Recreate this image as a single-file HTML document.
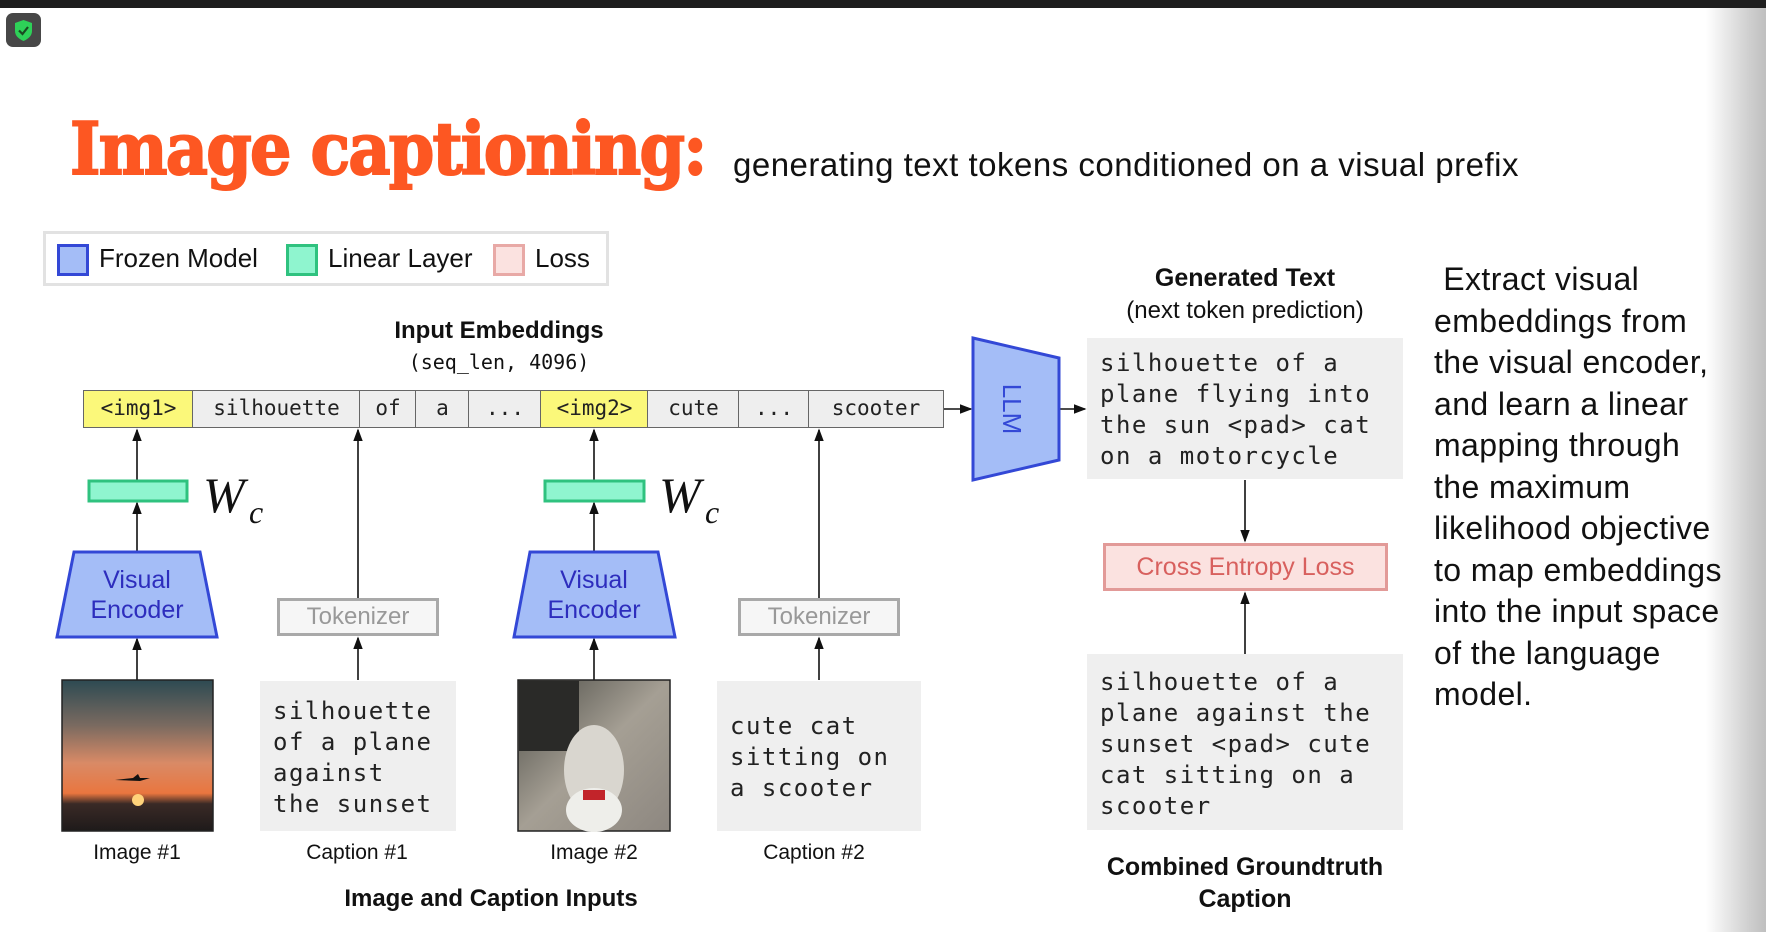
<!DOCTYPE html>
<html><head><meta charset="utf-8">
<style>
*{margin:0;padding:0;box-sizing:border-box}
body{width:1766px;height:932px;background:#fff;position:relative;overflow:hidden;font-family:"Liberation Sans",sans-serif;color:#111}
.a{position:absolute}
.mono{font-family:"DejaVu Sans Mono","Liberation Mono",monospace}
.tok{position:absolute;top:390px;height:38px;border:1.5px solid #666;background:#eee;font-size:21px;line-height:35px;text-align:center;font-family:"DejaVu Sans Mono",monospace;color:#222}
.y{background:#fbf87a}
.lbl{position:absolute;font-size:21px;text-align:center;transform:translateX(-50%);white-space:nowrap}
.box{position:absolute;background:#efefef;font-family:"DejaVu Sans Mono",monospace;font-size:24px;line-height:31px;color:#222;white-space:pre;letter-spacing:1.5px}
.tk{position:absolute;height:38px;border:3px solid #a9a9a9;background:#f6f6f6;color:#999;font-size:24px;text-align:center;line-height:32px}
</style></head><body>
<div class="a" style="left:0;top:0;width:1766px;height:8px;background:#1e1e1e"></div>
<div class="a" style="left:6px;top:13px;width:35px;height:34px;background:#474747;border-radius:7px"></div>
<svg class="a" style="left:6px;top:13px" width="35" height="34"><path d="M17.5 7 L26 10 L26 18 C26 23 22 26 17.5 28 C13 26 9 23 9 18 L9 10 Z" fill="#2ed158"/><path d="M13 17.5 L16.5 21 L22 14" stroke="#1a4a22" stroke-width="2.2" fill="none"/></svg>
<div class="a" style="right:0;top:8px;width:60px;height:924px;background:linear-gradient(to right,rgba(255,255,255,0),#d0d0d0 70%,#bfbfbf)"></div>

<div class="a" style="left:70px;top:106px;font-family:'DejaVu Serif','Liberation Serif',serif;font-weight:900;font-size:72px;color:#fd5722;letter-spacing:-2px;transform:scaleX(0.905);transform-origin:left;-webkit-text-stroke:2px #fd5722;white-space:nowrap">Image captioning:</div>
<div class="a" style="left:733px;top:146px;font-size:33px;letter-spacing:0.5px;color:#111;white-space:nowrap">generating text tokens conditioned on a visual prefix</div>

<div class="a" style="left:43px;top:231px;width:566px;height:55px;border:3px solid #e2e2e2;background:#fff"></div>
<div class="a" style="left:57px;top:244px;width:32px;height:32px;background:#a4bdf7;border:3px solid #3348d6"></div>
<div class="a" style="left:99px;top:243px;font-size:26px">Frozen Model</div>
<div class="a" style="left:286px;top:244px;width:32px;height:32px;background:#8ff5cf;border:3px solid #2fc27f"></div>
<div class="a" style="left:328px;top:243px;font-size:26px">Linear Layer</div>
<div class="a" style="left:493px;top:244px;width:32px;height:32px;background:#fbe2e0;border:3px solid #e8a9a6"></div>
<div class="a" style="left:535px;top:243px;font-size:26px">Loss</div>

<div class="lbl" style="left:499px;top:317px;font-weight:bold;font-size:24px">Input Embeddings</div>
<div class="lbl mono" style="left:499px;top:350px;font-size:20px">(seq_len, 4096)</div>

<div class="tok y" style="left:83px;width:111px">&lt;img1&gt;</div>
<div class="tok" style="left:192px;width:169px">silhouette</div>
<div class="tok" style="left:359px;width:58px">of</div>
<div class="tok" style="left:415px;width:55px">a</div>
<div class="tok" style="left:468px;width:74px">...</div>
<div class="tok y" style="left:540px;width:109px">&lt;img2&gt;</div>
<div class="tok" style="left:647px;width:93px">cute</div>
<div class="tok" style="left:738px;width:72px">...</div>
<div class="tok" style="left:808px;width:136px">scooter</div>

<svg class="a" style="left:0;top:0" width="1766" height="932">
<defs><marker id="ar" markerWidth="8" markerHeight="8" refX="7" refY="4" orient="auto"><path d="M0 1 L8 4 L0 7Z" fill="#111"/></marker></defs>
<g stroke="#111" stroke-width="1.6" fill="none" marker-end="url(#ar)">
<line x1="137" y1="680" x2="137" y2="639"/><line x1="137" y1="552" x2="137" y2="503"/><line x1="137" y1="481" x2="137" y2="430"/>
<line x1="594" y1="680" x2="594" y2="639"/><line x1="594" y1="552" x2="594" y2="503"/><line x1="594" y1="481" x2="594" y2="430"/>
<line x1="358" y1="680" x2="358" y2="638"/><line x1="358" y1="598" x2="358" y2="430"/>
<line x1="819" y1="680" x2="819" y2="638"/><line x1="819" y1="598" x2="819" y2="430"/>
<line x1="944" y1="409" x2="971" y2="409"/><line x1="1059" y1="409" x2="1085" y2="409"/>
<line x1="1245" y1="480" x2="1245" y2="541"/><line x1="1245" y1="654" x2="1245" y2="593"/>
</g>
<polygon points="74,552 200,552 217,637 57,637" fill="#a4bdf7" stroke="#3348d6" stroke-width="3"/>
<polygon points="530,552 658,552 675,637 514,637" fill="#a4bdf7" stroke="#3348d6" stroke-width="3"/>
<polygon points="973,338 1059,358 1059,460 973,480" fill="#a4bdf7" stroke="#3348d6" stroke-width="3"/>
<rect x="89" y="481" width="98" height="20" fill="#8ff5cf" stroke="#2fc27f" stroke-width="3"/>
<rect x="545" y="481" width="99" height="20" fill="#8ff5cf" stroke="#2fc27f" stroke-width="3"/>
<text x="1010" y="409" font-family="Liberation Sans" font-size="26" fill="#3348d6" text-anchor="middle" transform="rotate(90 1010 409)" dominant-baseline="middle">LLM</text>
<text x="203" y="512" font-family="Liberation Serif" font-style="italic" font-size="50" fill="#111">W</text>
<text x="249" y="523" font-family="Liberation Serif" font-style="italic" font-size="32" fill="#111">c</text>
<text x="659" y="512" font-family="Liberation Serif" font-style="italic" font-size="50" fill="#111">W</text>
<text x="705" y="523" font-family="Liberation Serif" font-style="italic" font-size="32" fill="#111">c</text>
<defs>
<linearGradient id="sky" x1="0" y1="0" x2="0" y2="1"><stop offset="0" stop-color="#2d4a52"/><stop offset=".3" stop-color="#7a6a60"/><stop offset=".55" stop-color="#d98a66"/><stop offset=".75" stop-color="#e9763f"/><stop offset=".82" stop-color="#3a2a26"/><stop offset="1" stop-color="#1e1a1a"/></linearGradient>
<linearGradient id="sc" x1="0" y1="0" x2="1" y2="1"><stop offset="0" stop-color="#4a4a44"/><stop offset=".5" stop-color="#a59f94"/><stop offset="1" stop-color="#8d8780"/></linearGradient>
</defs>
<rect x="62" y="680" width="151" height="151" fill="url(#sky)" stroke="#222" stroke-width="1.5"/>
<circle cx="138" cy="800" r="6" fill="#ffd27a"/>
<path d="M115 780 l18 -2 l5 -4 l2 4 l10 0 l-10 3 z" fill="#111"/>
<rect x="518" y="680" width="152" height="151" fill="url(#sc)" stroke="#222" stroke-width="1.5"/>
<rect x="519" y="681" width="60" height="70" fill="#2a2a28"/>
<ellipse cx="594" cy="770" rx="30" ry="45" fill="#d9d6cf"/>
<ellipse cx="594" cy="810" rx="28" ry="22" fill="#eeeeea"/>
<rect x="583" y="790" width="22" height="10" fill="#c2242a"/>
</svg>

<div class="lbl" style="left:137px;top:565px;font-size:25px;color:#2d2dbd;line-height:30px">Visual<br>Encoder</div>
<div class="lbl" style="left:594px;top:565px;font-size:25px;color:#2d2dbd;line-height:30px">Visual<br>Encoder</div>
<div class="tk" style="left:277px;top:598px;width:162px">Tokenizer</div>
<div class="tk" style="left:738px;top:598px;width:162px">Tokenizer</div>

<div class="box" style="left:260px;top:681px;width:196px;height:150px;padding:15px 0 0 13px">silhouette
of a plane
against
the sunset</div>
<div class="box" style="left:717px;top:681px;width:204px;height:150px;padding:30px 0 0 13px">cute cat
sitting on
a scooter</div>

<div class="lbl" style="left:137px;top:841px">Image #1</div>
<div class="lbl" style="left:357px;top:841px">Caption #1</div>
<div class="lbl" style="left:594px;top:841px">Image #2</div>
<div class="lbl" style="left:814px;top:841px">Caption #2</div>
<div class="lbl" style="left:491px;top:885px;font-weight:bold;font-size:24px">Image and Caption Inputs</div>

<div class="lbl" style="left:1245px;top:264px;font-weight:bold;font-size:25px">Generated Text</div>
<div class="lbl" style="left:1245px;top:297px;font-size:24px">(next token prediction)</div>
<div class="box" style="left:1087px;top:338px;width:316px;height:141px;padding:10px 0 0 13px">silhouette of a
plane flying into
the sun &lt;pad&gt; cat
on a motorcycle</div>
<div class="a" style="left:1103px;top:543px;width:285px;height:48px;border:3px solid #e29a98;background:#fbe2e0;color:#d8605e;font-size:25px;text-align:center;line-height:42px">Cross Entropy Loss</div>
<div class="box" style="left:1087px;top:654px;width:316px;height:176px;padding:13px 0 0 13px">silhouette of a
plane against the
sunset &lt;pad&gt; cute
cat sitting on a
scooter</div>
<div class="lbl" style="left:1245px;top:853px;font-weight:bold;font-size:25px">Combined Groundtruth</div>
<div class="lbl" style="left:1245px;top:885px;font-weight:bold;font-size:25px">Caption</div>

<div class="a" style="left:1434px;top:259px;font-size:32px;letter-spacing:0.4px;line-height:41.5px;color:#111;white-space:nowrap">&nbsp;Extract visual<br>embeddings from<br>the visual encoder,<br>and learn a linear<br>mapping through<br>the maximum<br>likelihood objective<br>to map embeddings<br>into the input space<br>of the language<br>model.</div>
</body></html>
